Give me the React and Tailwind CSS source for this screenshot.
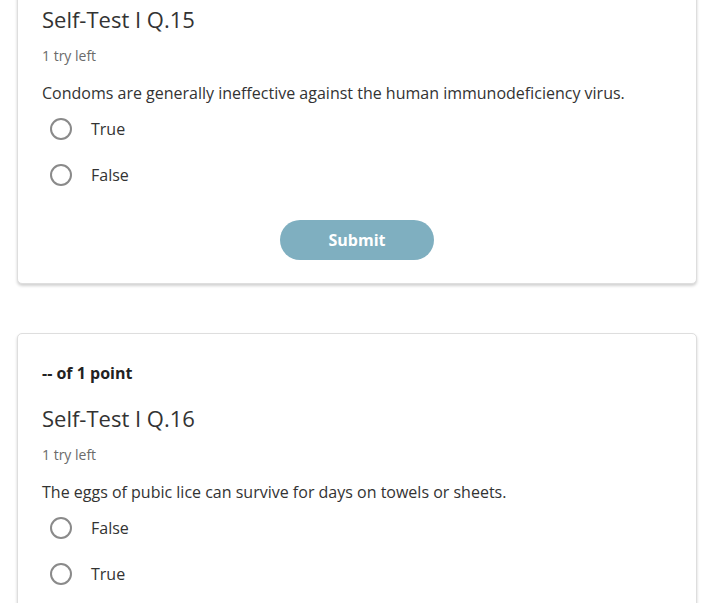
import React from 'react'

const questions = [
  {
    id: 15,
    text: 'Condoms are generally ineffective against the human immunodeficiency virus.',
    options: ['True', 'False'],
    submit: true,
  },
  {
    id: 16,
    text: 'The eggs of pubic lice can survive for days on towels or sheets.',
    options: ['False', 'True'],
    submit: true,
  },
]

function Radio({ label }) {
  return (
    <label className="flex h-[46px] items-center pl-[8px]">
      <span className="h-[22px] w-[22px] rounded-full border-2 border-[#8a8a8a] bg-white" />
      <span className="ml-[19px] text-[16px] text-[#333]">{label}</span>
    </label>
  )
}

function QuestionCard({ q }) {
  return (
    <div className="rounded-[5px] border border-[#dedede] bg-white px-[24px] pt-[27px] pb-[23px] shadow-[0_2px_3px_rgba(0,0,0,0.18)]">
      <div className="text-[16px] leading-[24px] font-bold text-[#222]">-- of 1 point</div>
      <h2 className="mt-[18px] text-[22px] leading-[30px] text-[#333]">Self-Test I Q.{q.id}</h2>
      <div className="mt-[12px] text-[14px] leading-[20px] text-[#6b6b6b]">1 try left</div>
      <p className="mt-[15px] text-[16px] leading-[24px] text-[#333]">{q.text}</p>
      <div className="mt-px">
        {q.options.map((o) => (
          <Radio key={o} label={o} />
        ))}
      </div>
      {q.submit && (
        <div className="mt-[22px] flex justify-center">
          <button className="h-[40px] w-[154px] rounded-full bg-[#7fafc0] text-[16px] font-bold text-white">
            Submit
          </button>
        </div>
      )}
    </div>
  )
}

export default function App() {
  return (
    <div className="h-[603px] overflow-hidden bg-white" style={{ fontFamily: '"Open Sans", sans-serif' }}>
      <div className="-mt-[66px] ml-[17px] w-[680px] space-y-[49px]">
        {questions.map((q) => (
          <QuestionCard key={q.id} q={q} />
        ))}
      </div>
    </div>
  )
}
